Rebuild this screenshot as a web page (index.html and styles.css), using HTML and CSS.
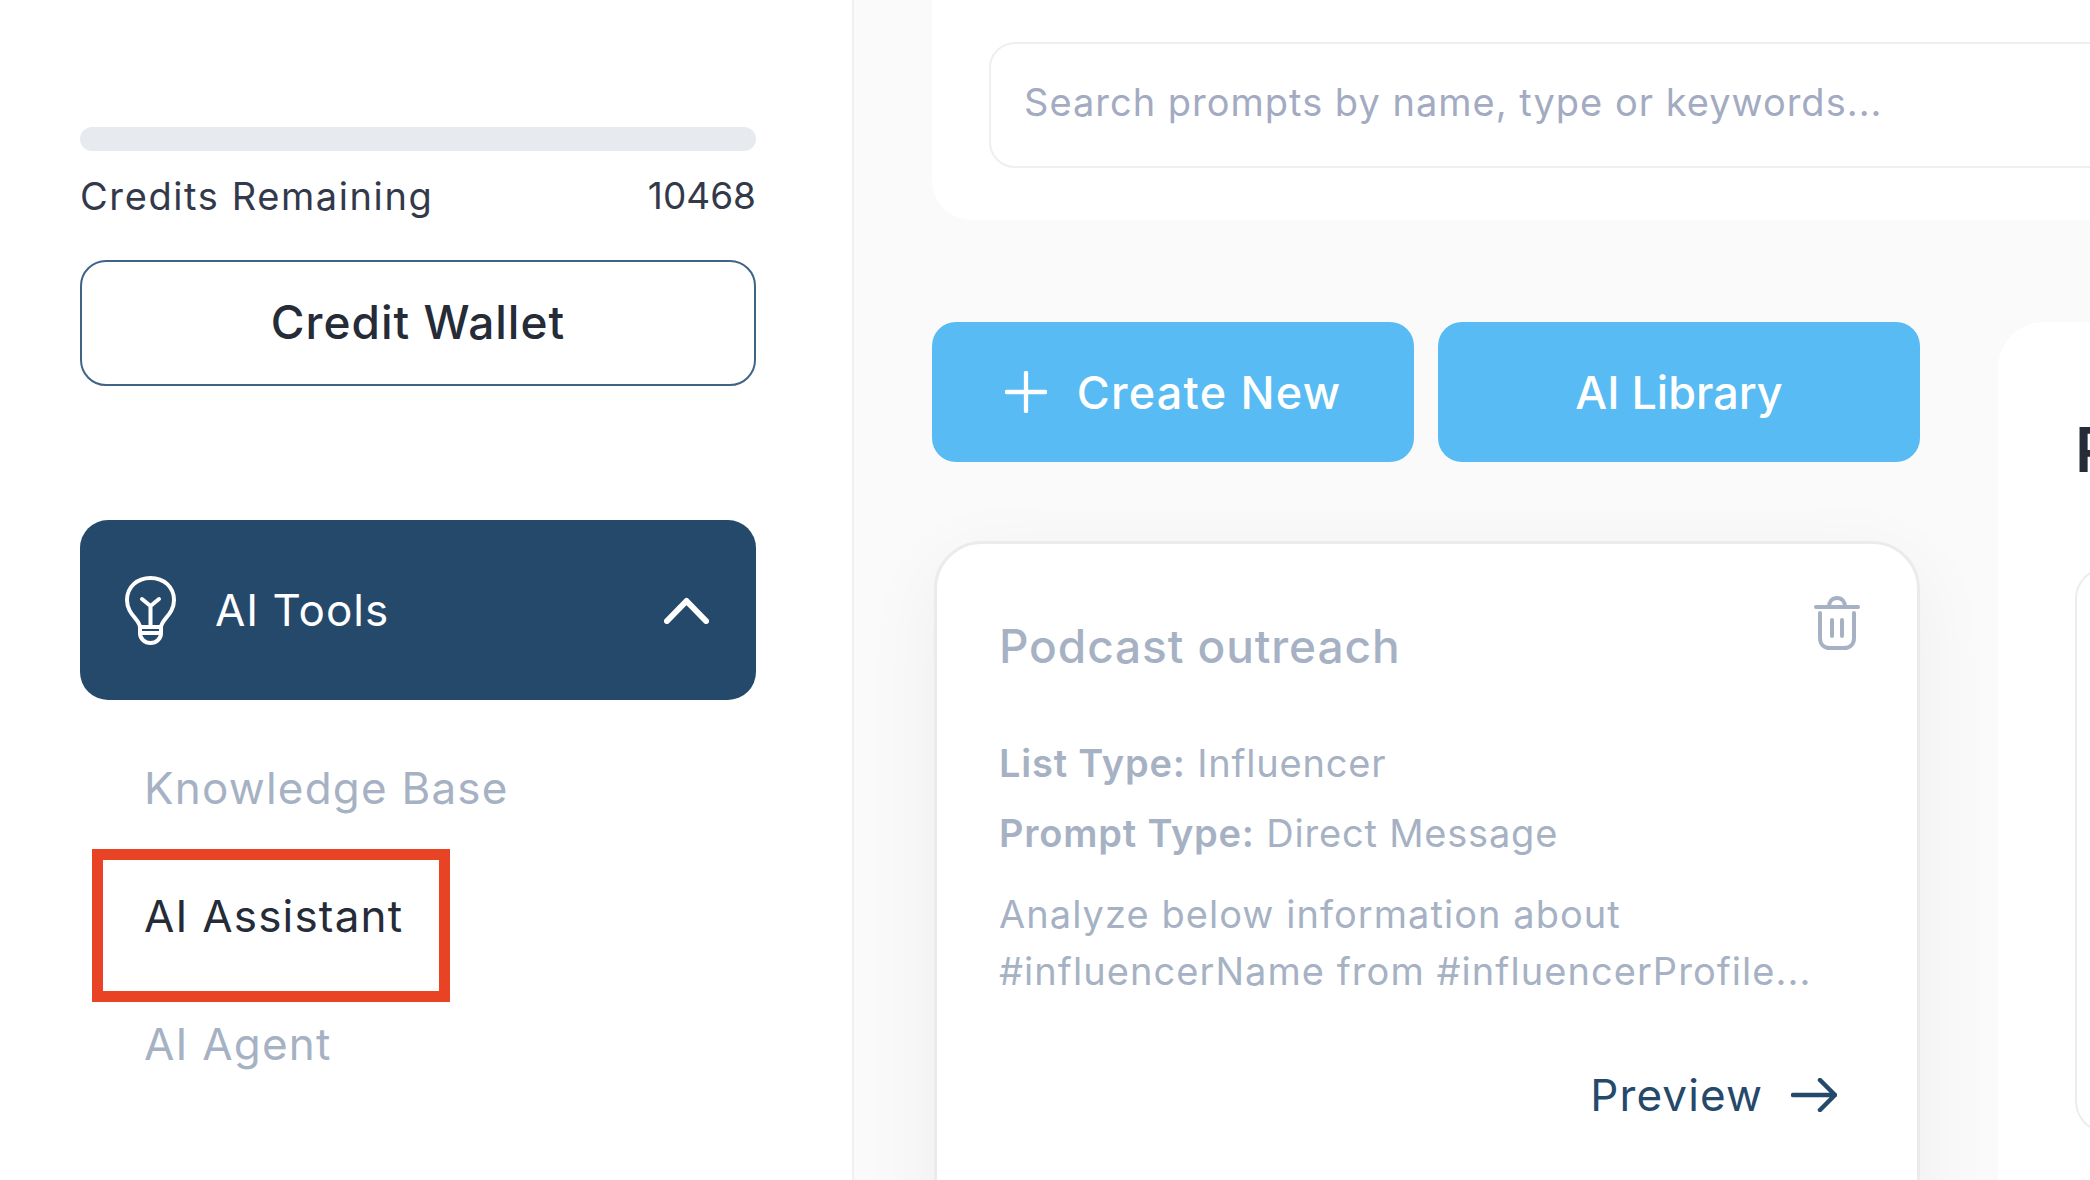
FILE: index.html
```html
<!DOCTYPE html>
<html lang="en">

<head>
    <meta charset="UTF-8">
    <meta name="viewport" content="width=device-width, initial-scale=1.0">
    <title>AI Assistant</title>
    <link rel="stylesheet" href="styles.css">
</head>

<body>
    <div class="app">
        <aside class="sidebar">
            <div class="credit-bar"></div>
            <div class="credit-row">
                <span class="credit-label">Credits Remaining</span>
                <span>10468</span>
            </div>
            <button class="wallet-btn">Credit Wallet</button>

            <div class="nav-head">
                <svg class="bulb" viewBox="0 0 53 69" fill="none" stroke="#fff" stroke-width="4" stroke-linecap="round" stroke-linejoin="round">
                    <path d="M16 51 C15 43 3 38 3 24 C3 11 13 2 26.5 2 C40 2 50 11 50 24 C50 38 38 43 37 51 Z" />
                    <path d="M16 51 L16 57 C16 63 21 67 26.5 67 C32 67 37 63 37 57 L37 51" />
                    <path d="M16 57 L37 57" />
                    <path d="M26.5 51 L26.5 30 M18 23 L26.5 30 L35 23" />
                </svg>
                <span class="nav-label">AI Tools</span>
                <svg class="chevron" viewBox="0 0 45 27" fill="none" stroke="#fff" stroke-width="6" stroke-linecap="round" stroke-linejoin="round">
                    <path d="M3 24 L22.5 4 L42 24" />
                </svg>
            </div>

            <ul class="nav-list">
                <li>Knowledge Base</li>
                <li class="active">AI Assistant</li>
                <li>AI Agent</li>
            </ul>
        </aside>

        <main class="content">
            <div class="search-card">
                <input class="search-input" type="text" placeholder="Search prompts by name, type or keywords...">
            </div>

            <div class="columns">
                <section class="prompts">
                    <div class="actions">
                        <button class="action-btn action-create">
                            <svg class="plus" viewBox="0 0 44 44" fill="none" stroke="#fff" stroke-width="4.5" stroke-linecap="round">
                                <path d="M22 2 L22 42 M2 22 L42 22" />
                            </svg>
                            Create New
                        </button>
                        <button class="action-btn">AI Library</button>
                    </div>

                    <article class="prompt-card">
                        <div class="card-top">
                            <h3>Podcast outreach</h3>
                            <svg class="trash" viewBox="0 0 46 54" fill="none" stroke="#a6b2c4" stroke-width="4" stroke-linecap="round" stroke-linejoin="round">
                                <path d="M2 11 L44 11" />
                                <path d="M15 11 C15 6 18 2 23 2 C28 2 31 6 31 11" />
                                <path d="M6 17 L6 42 C6 48 10 52 16 52 L30 52 C36 52 40 48 40 42 L40 17" />
                                <path d="M18 24 L18 40 M28 24 L28 40" />
                            </svg>
                        </div>
                        <p class="meta"><b>List Type:</b> Influencer</p>
                        <p class="meta"><b>Prompt Type:</b> Direct Message</p>
                        <p class="desc">Analyze below information about #influencerName from #influencerProfile...</p>
                        <div class="card-foot">
                            <span>Preview</span>
                            <svg class="arrow" viewBox="0 0 46 34" fill="none" stroke="#25496b" stroke-width="4.5" stroke-linecap="round" stroke-linejoin="round">
                                <path d="M2 17 L44 17 M29 2 L44 17 L29 32" />
                            </svg>
                        </div>
                    </article>
                </section>

                <section class="preview-panel">
                    <h2>Preview</h2>
                    <div class="preview-box"></div>
                </section>
            </div>
        </main>
    </div>
</body>

</html>
```

FILE: styles.css
```css
/* Reset */
* {
    box-sizing: border-box;
}

body {
    margin: 0;
    height: 1180px;
    overflow: hidden;
    background-color: #fafafa;
    color: #252b37;
    font-family: Inter, 'Noto Sans', sans-serif;
}

.app {
    display: flex;
    height: 1180px;
    overflow: hidden;
}

/* Sidebar */
.sidebar {
    width: 854px;
    flex-shrink: 0;
    padding: 127px 96px 0 80px;
    background-color: #fff;
    border-right: 2px solid #f0f0f0;
}

.credit-bar {
    height: 24px;
    border-radius: 12px;
    background-color: #e7eaee;
}

.credit-row {
    display: flex;
    justify-content: space-between;
    margin-top: 23px;
    font-size: 37px;
    line-height: 44px;
    color: #33394a;
}

.credit-label {
    font-size: 38px;
    letter-spacing: 1.6px;
}

.wallet-btn {
    display: block;
    width: 100%;
    height: 126px;
    margin-top: 42px;
    padding-bottom: 4px;
    background-color: #fff;
    border: 2px solid #3f6488;
    border-radius: 26px;
    color: #252b37;
    font-family: inherit;
    font-size: 46px;
    font-weight: 500;
    letter-spacing: 1px;
}

.nav-head {
    display: flex;
    align-items: center;
    height: 180px;
    margin-top: 134px;
    padding: 0 47px 0 44px;
    background-color: #25496b;
    border-radius: 28px;
    color: #fff;
}

.bulb {
    width: 53px;
    height: 69px;
}

.nav-label {
    flex: 1;
    margin-left: 38px;
    font-size: 44px;
    letter-spacing: 1px;
}

.chevron {
    width: 45px;
    height: 27px;
}

.nav-list {
    list-style: none;
    margin: 56px 0 0;
    padding: 0 0 0 64px;
    color: #a6b2c4;
    font-size: 44px;
    letter-spacing: 1.2px;
}

.nav-list li {
    height: 128px;
    line-height: 64px;
}

.nav-list .active {
    position: relative;
    color: #252b37;
}

/* red marker drawn round the active item */
.nav-list .active::after {
    content: "";
    position: absolute;
    left: -52px;
    top: -35px;
    box-sizing: border-box;
    width: 358px;
    height: 153px;
    border: 11px solid #e94326;
}

/* Main area */
.content {
    flex: 1;
    min-width: 0;
    padding-left: 78px;
}

.search-card {
    width: 1400px;
    height: 260px;
    margin-top: -40px;
    padding: 82px 0 0 57px;
    background-color: #fff;
    border-radius: 40px;
}

.search-input {
    display: block;
    width: 1400px;
    height: 126px;
    padding: 0 33px 6px;
    background-color: #fff;
    border: 2px solid #efefef;
    border-radius: 26px;
    font-family: inherit;
    font-size: 38px;
    letter-spacing: 1px;
    outline: none;
}

.search-input::placeholder {
    color: #a3abc2;
}

.columns {
    display: flex;
    gap: 77px;
    margin-top: 102px;
}

.prompts {
    width: 989px;
    flex-shrink: 0;
}

.actions {
    display: flex;
    gap: 24px;
}

.action-btn {
    display: flex;
    align-items: center;
    justify-content: center;
    gap: 30px;
    width: 482px;
    height: 140px;
    background-color: #58bbf3;
    border: none;
    border-radius: 24px;
    color: #fff;
    font-family: inherit;
    font-size: 45px;
    font-weight: 500;
}

.action-create {
    letter-spacing: 1.2px;
}

.plus {
    width: 42px;
    height: 42px;
}

.prompt-card {
    width: 986px;
    height: 760px;
    margin: 79px 0 0 2px;
    padding: 52px 57px 0 62px;
    background-color: #fff;
    border: 3px solid #ebebeb;
    border-radius: 48px;
    box-shadow: 0 20px 80px rgba(0, 0, 0, 0.05);
    color: #a6b2c4;
}

.card-top {
    display: flex;
    justify-content: space-between;
    align-items: flex-start;
    height: 143px;
}

.card-top h3 {
    margin: 22px 0 0;
    font-size: 46px;
    font-weight: 500;
    letter-spacing: 0.9px;
}

.trash {
    width: 46px;
    height: 54px;
}

.meta {
    margin: 0 0 22px;
    font-size: 38px;
    letter-spacing: 0.8px;
    line-height: 48px;
}

.meta b {
    font-weight: 600;
}

.desc {
    width: 850px;
    margin: 29px 0 0;
    font-size: 38px;
    letter-spacing: 1.05px;
    line-height: 57px;
}

.card-foot {
    display: flex;
    justify-content: flex-end;
    align-items: center;
    gap: 28px;
    margin: 68px 23px 0 0;
    color: #25496b;
    font-size: 44px;
    letter-spacing: 1.1px;
}

.arrow {
    width: 46px;
    height: 34px;
}

/* Right panel, cut off by the window */
.preview-panel {
    width: 400px;
    flex-shrink: 0;
    height: 900px;
    padding: 92px 0 0 77px;
    background-color: #fff;
    border-radius: 46px;
}

.preview-panel h2 {
    margin: 0;
    font-size: 62px;
    font-weight: 600;
    line-height: 72px;
}

.preview-box {
    width: 300px;
    height: 566px;
    margin-top: 81px;
    border: 2px solid #ededed;
    border-radius: 32px;
}
```
